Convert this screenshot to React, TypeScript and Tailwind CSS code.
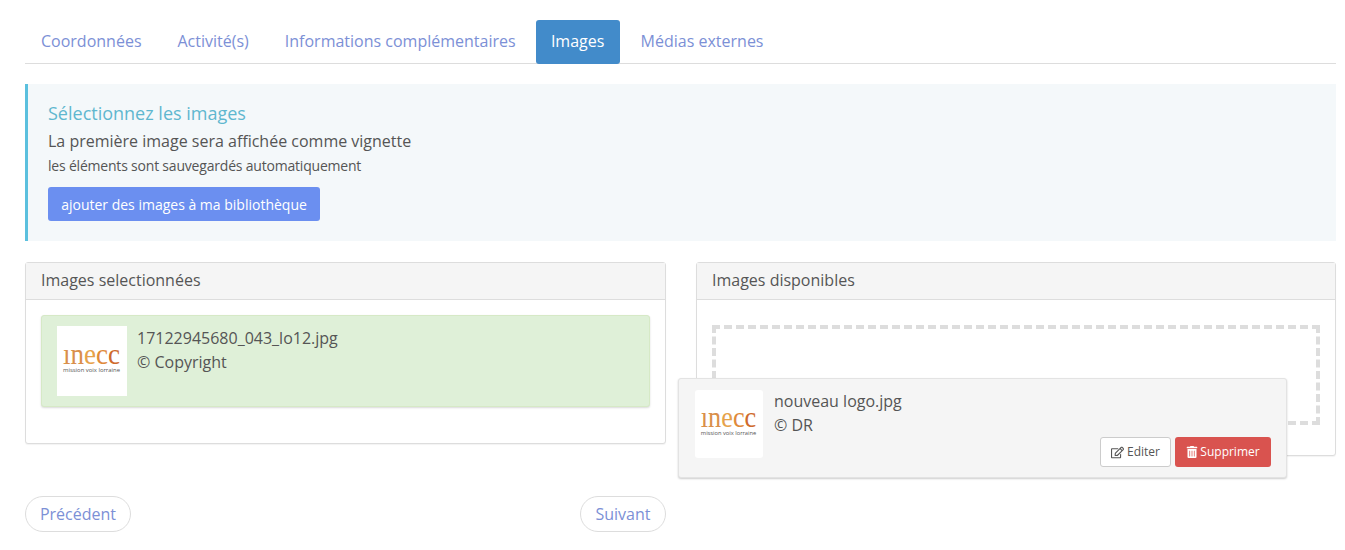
import type { ReactNode } from "react";
import { FaRegEdit, FaTrashAlt } from "react-icons/fa";

const TABS = ["Coordonnées", "Activité(s)", "Informations complémentaires", "Images", "Médias externes"];

function Logo({ className }: { className: string }) {
  return (
    <svg viewBox="0 0 70 70" className={`shrink-0 bg-white ${className}`}>
      <text x="6" y="38" textLength="57" lengthAdjust="spacingAndGlyphs" fontFamily="Liberation Serif, serif" fontSize="30">
        <tspan fill="#d98f4a">ın</tspan>
        <tspan fill="#e6a24a">e</tspan>
        <tspan fill="#e08a3a">c</tspan>
        <tspan fill="#cf6a2c">c</tspan>
      </text>
      <text x="6" y="46" textLength="57" lengthAdjust="spacingAndGlyphs" fontFamily="Open Sans, sans-serif" fontSize="6" fill="#555">
        mission voix lorraine
      </text>
    </svg>
  );
}

function Panel({ title, className, children }: { title: string; className: string; children: ReactNode }) {
  return (
    <div className={`rounded-[3px] border border-[#ddd] bg-white shadow-[0_1px_1px_rgba(0,0,0,0.05)] ${className}`}>
      <div className="flex h-[37px] items-center border-b border-[#ddd] bg-[#f5f5f5] px-[15px] pb-[2px] text-[16px] text-[#555]">
        {title}
      </div>
      {children}
    </div>
  );
}

export default function App() {
  return (
    <div className="h-[550px] overflow-hidden bg-white pl-[25px] pr-[9px] pt-[20px] font-['Open_Sans',sans-serif] text-[#555]">
      <div className="flex h-[44px] gap-[4px] border-b border-[#ddd] text-[16px]">
        {TABS.map((tab) =>
          tab === "Images" ? (
            <div key={tab} className="mr-[1px] flex h-[44px] w-[84px] items-center justify-center rounded-[3px] bg-[#428bca] pb-[2px] text-white">
              {tab}
            </div>
          ) : (
            <div key={tab} className="flex h-[43px] items-center px-[16px] pb-[2px] text-[#7c90d6]">
              {tab}
            </div>
          ),
        )}
      </div>

      <div className="mt-[20px] h-[157px] border-l-[3px] border-[#5bc0de] bg-[#f4f8fa] pl-[20px] pt-[17px]">
        <div className="text-[18px] leading-[25px] text-[#5fb7cf]">Sélectionnez les images</div>
        <div className="mt-[4px] text-[16px] leading-[22px] text-[#555]">La première image sera affichée comme vignette</div>
        <div className="mt-[4px] text-[14px] leading-[20px] tracking-[-0.2px] text-[#555]">les éléments sont sauvegardés automatiquement</div>
        <div className="mt-[11px] flex h-[34px] w-[272px] items-center justify-center rounded-[3px] bg-[#6b8ff0] text-[14px] text-white">
          ajouter des images à ma bibliothèque
        </div>
      </div>

      <div className="mt-[21px] grid grid-cols-[641px_640px] items-start gap-[30px]">
        <div>
          <Panel title="Images selectionnées" className="h-[182px]">
            <div className="mx-[15px] mt-[15px] flex h-[92px] gap-[10px] rounded-[3px] border border-[#d6e9c6] bg-[#dff0d8] p-[10px] pl-[15px] shadow-[0_1px_2px_rgba(0,0,0,0.15)]">
              <Logo className="h-[70px] w-[70px]" />
              <div className="text-[16px] leading-[24px] text-[#555]">
                <div>17122945680_043_lo12.jpg</div>
                <div>© Copyright</div>
              </div>
            </div>
          </Panel>
          <div className="mt-[52px] flex justify-between">
            <div className="flex h-[36px] w-[106px] items-center justify-center rounded-full border border-[#ddd] bg-white text-[16px] text-[#7c90d6]">
              Précédent
            </div>
            <div className="flex h-[36px] w-[86px] items-center justify-center rounded-full border border-[#ddd] bg-white text-[16px] text-[#7c90d6]">
              Suivant
            </div>
          </div>
        </div>

        <div className="relative">
          <Panel title="Images disponibles" className="h-[194px]">
            <div className="mx-[15px] mt-[25px] h-[100px] border-[4px] border-dashed border-[#ddd]" />
          </Panel>
          <div className="absolute left-[-18px] top-[116px] flex h-[100px] w-[609px] gap-[11px] rounded-[3px] border border-[#e3e3e3] bg-[#f5f5f5] py-[10px] pl-[15px] shadow-[0_1px_2px_rgba(0,0,0,0.2)]">
            <Logo className="ml-[1px] mt-[1px] h-[68px] w-[68px] rounded-[3px]" />
            <div className="text-[16px] leading-[24px] text-[#555]">
              <div>nouveau logo.jpg</div>
              <div>© DR</div>
            </div>
            <div className="absolute bottom-[10px] right-[15px] flex gap-[4px] text-[12px]">
              <div className="flex h-[30px] w-[71px] items-center justify-center gap-[3px] rounded-[3px] border border-[#ccc] bg-white text-[#555]">
                <FaRegEdit size={13} />
                Editer
              </div>
              <div className="flex h-[30px] w-[96px] items-center justify-center gap-[2px] rounded-[3px] bg-[#d9534f] text-white">
                <FaTrashAlt size={12} />
                Supprimer
              </div>
            </div>
          </div>
        </div>
      </div>
    </div>
  );
}
